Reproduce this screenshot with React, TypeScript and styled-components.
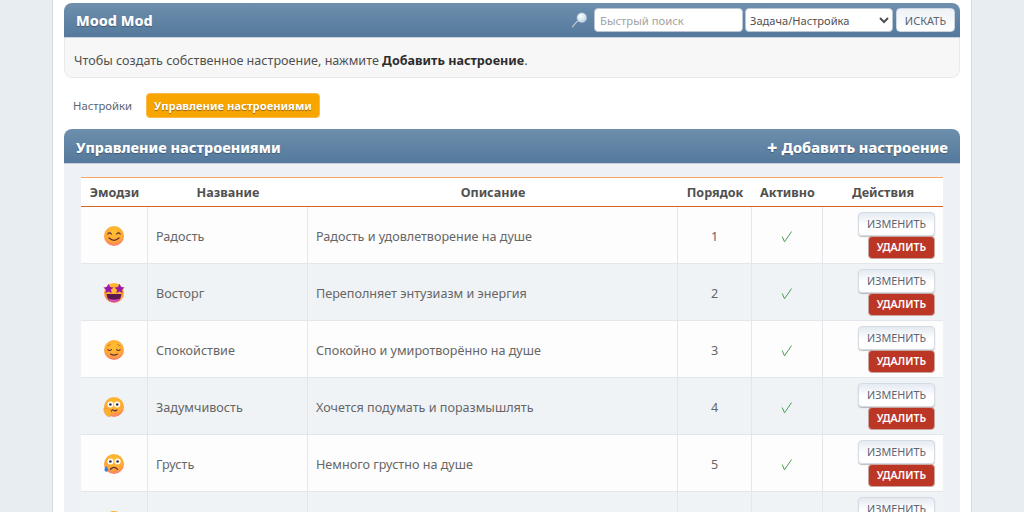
import React from 'react';
import styled, { createGlobalStyle } from 'styled-components';

type Face = 'smile' | 'stars' | 'calm' | 'think' | 'sad' | 'angry';

type Mood = {
    id: number;
    face: Face;
    name: string;
    description: string;
};

const moods: Mood[] = [
    { id: 1, face: 'smile', name: 'Радость', description: 'Радость и удовлетворение на душе' },
    { id: 2, face: 'stars', name: 'Восторг', description: 'Переполняет энтузиазм и энергия' },
    { id: 3, face: 'calm', name: 'Спокойствие', description: 'Спокойно и умиротворённо на душе' },
    { id: 4, face: 'think', name: 'Задумчивость', description: 'Хочется подумать и поразмышлять' },
    { id: 5, face: 'sad', name: 'Грусть', description: 'Немного грустно на душе' },
    { id: 6, face: 'angry', name: 'Злость', description: 'Раздражение и злость' },
];

const GlobalStyle = createGlobalStyle`
  html, body {
    margin: 0;
    height: 100%;
    overflow: hidden;
    background: #e8edf2;
    font-family: "Noto Sans", "Open Sans", sans-serif;
    font-size: 12.6px;
    color: #505050;
  }
`;

const Eye = ({ cx }: { cx: number }) => (
    <>
        <circle cx={cx} cy="8.5" r="3" fill="#fff" />
        <circle cx={cx} cy="8.5" r="1.3" fill="#3a2a3a" />
    </>
);

const EmojiIcon = ({ face }: { face: Face }) => (
    <svg width="22" height="22" viewBox="0 0 22 22">
        <defs>
            <radialGradient id={'g' + face} cx="0.5" cy="0.3" r="0.8">
                <stop offset="0" stopColor="#ffc02e" />
                <stop offset="0.6" stopColor="#ffa733" />
                <stop offset="1" stopColor="#f7688c" />
            </radialGradient>
        </defs>
        <circle cx="11" cy="11" r="10" fill={`url(#g${face})`} />
        {face === 'smile' && (
            <g fill="none" stroke="#5b3140" strokeWidth="1.2" strokeLinecap="round">
                <path d="M4.800 9q1.800-2.400 3.600 0M13.600 9q1.800-2.400 3.600 0" />
                <path d="M6 13q5 4.600 10 0" />
            </g>
        )}
        {face === 'stars' && (
            <>
                <path d="M3.500 12h15q-.6 7.600-7.500 7.800-6.900-.2-7.500-7.800z" fill="#5a1a50" />
                <path d="M5.500 16.600q5.500 2.400 11 0-1.600 3.200-5.500 3.200t-5.500-3.200z" fill="#e04fd0" />
                <path d="M5.500 1.800l1.600 3.200 3.500.4-2.600 2.400.7 3.400-3.200-1.700-3.200 1.700.7-3.400L.4 5.400l3.500-.4zM16.500 1.800l1.600 3.200 3.500.4-2.600 2.400.7 3.400-3.200-1.700-3.200 1.700.7-3.400-2.600-2.400 3.500-.4z" fill="#9a17a8" />
            </>
        )}
        {face === 'calm' && (
            <g fill="none" stroke="#5b3140" strokeWidth="1.100" strokeLinecap="round">
                <path d="M4.800 10.600q1.800 1.800 3.600 0M13.600 10.600q1.800 1.800 3.600 0" />
                <path d="M4.800 6.800l2.600-1.400M17.200 6.800l-2.600-1.400" strokeWidth="0.7" stroke="#b8663a" />
                <path d="M7.500 15q3.500 2.200 7 0" />
            </g>
        )}
        {face === 'think' && (
            <>
                <Eye cx={7.4} />
                <Eye cx={14.2} />
                <path d="M8 15.500q1.200-2.400 2.800-1.200 1.400 1 3-.4" fill="none" stroke="#5b3140" strokeWidth="1.300" strokeLinecap="round" />
                <path d="M.6 12.800q3.800-1.800 7.400 1.800 1 4-1.500 6.400-5-1-5.900-8.200z" fill="#fdb02e" stroke="#ef8f3a" strokeWidth="0.5" />
            </>
        )}
        {face === 'sad' && (
            <>
                <Eye cx={7.4} />
                <Eye cx={14.6} />
                <path d="M7.500 16.200q3.500-3.600 7 0" fill="none" stroke="#5b3140" strokeWidth="1.300" strokeLinecap="round" />
                <path d="M3 13q-2.200 3.200-1.200 5 1.600 1.400 3.200 0 .8-1.800-2-5z" fill="#3a7fd8" />
            </>
        )}
        {face === 'angry' && (
            <g fill="none" stroke="#5b3140" strokeWidth="1.200" strokeLinecap="round">
                <path d="M5 7l3.500 1.600M17 7l-3.500 1.600" />
                <path d="M7.500 15.500q3.500-2.800 7 0" />
            </g>
        )}
    </svg>
);

const SearchIcon = () => (
    <svg width="16" height="16" viewBox="0 0 16 16">
        <defs>
            <radialGradient id="glass" cx="0.4" cy="0.35" r="0.7">
                <stop offset="0" stopColor="#ffffff" />
                <stop offset="1" stopColor="#bcd2e5" />
            </radialGradient>
        </defs>
        <path d="M5.500 9.500L1 14.500" stroke="#c4ced7" strokeWidth="1.800" strokeLinecap="round" />
        <path d="M6 10L1.500 15" stroke="#3d5a73" strokeWidth="0.700" strokeLinecap="round" />
        <circle cx="9.800" cy="5.700" r="5" fill="url(#glass)" stroke="#86a2ba" strokeWidth="0.500" />
    </svg>
);

const CheckIcon = () => (
    <svg width="12" height="13" viewBox="0 0 12 13">
        <path d="M1.200 6.500L3.500 11.800 10.600 1.500" fill="none" stroke="#4a9f52" strokeWidth="1" />
    </svg>
);

const App = () => {
    return (
        <>
            <GlobalStyle />
            <Page>
                <Block>
                    <BlockHeader>
                        <Title>Mood Mod</Title>
                        <SearchForm>
                            <SearchIcon />
                            <SearchInput placeholder="Быстрый поиск" readOnly />
                            <SearchSelect>
                                <option>Задача/Настройка</option>
                            </SearchSelect>
                            <SearchButton>ИСКАТЬ</SearchButton>
                        </SearchForm>
                    </BlockHeader>
                    <Notice>
                        Чтобы создать собственное настроение, нажмите <strong>Добавить настроение</strong>.
                    </Notice>
                </Block>
                <Tabs>
                    <Tab>Настройки</Tab>
                    <Tab active>Управление настроениями</Tab>
                </Tabs>
                <Block>
                    <BlockHeader>
                        <SectionTitle>Управление настроениями</SectionTitle>
                        <AddLink><PlusMark>+</PlusMark> Добавить настроение</AddLink>
                    </BlockHeader>
                    <BlockBody>
                        <Table>
                            <colgroup>
                                <col width="67" />
                                <col width="160" />
                                <col width="370" />
                                <col width="74" />
                                <col width="71" />
                                <col width="120" />
                            </colgroup>
                            <thead>
                                <tr>
                                    <Th>Эмодзи</Th>
                                    <Th>Название</Th>
                                    <Th>Описание</Th>
                                    <Th>Порядок</Th>
                                    <Th>Активно</Th>
                                    <Th>Действия</Th>
                                </tr>
                            </thead>
                            <tbody>
                                {moods.map((mood, index) => (
                                    <Row key={mood.id} even={index % 2 === 1}>
                                        <CenterCell><IconBox><EmojiIcon face={mood.face} /></IconBox></CenterCell>
                                        <Cell>{mood.name}</Cell>
                                        <Cell>{mood.description}</Cell>
                                        <CenterCell>{mood.id}</CenterCell>
                                        <CenterCell><IconBox><CheckIcon /></IconBox></CenterCell>
                                        <ActionsCell>
                                            <Actions>
                                                <EditButton>ИЗМЕНИТЬ</EditButton>
                                                <DeleteButton>УДАЛИТЬ</DeleteButton>
                                            </Actions>
                                        </ActionsCell>
                                    </Row>
                                ))}
                            </tbody>
                        </Table>
                    </BlockBody>
                </Block>
            </Page>
        </>
    );
};

const Page = styled.div`
  box-sizing: border-box;
  width: 920px;
  margin-left: 52px;
  padding: 3px 11px 20px;
  background: #fff;
  border-left: 1px solid #d3d8dd;
  border-right: 1px solid #d3d8dd;
  min-height: 100vh;
  display: flex;
  flex-direction: column;
`;

const Block = styled.div`
  border-radius: 8px;
  overflow: hidden;
`;

const BlockHeader = styled.div`
  height: 35px;
  box-sizing: border-box;
  display: flex;
  align-items: center;
  justify-content: space-between;
  padding: 0 5px 0 12px;
  background: linear-gradient(to bottom, #6e8fad, #54799c);
  border-bottom: 1px solid #c9d2da;
`;

const Title = styled.div`
  padding-top: 1px;
  font-size: 14.4px;
  font-weight: 800;
  color: #fff;
  text-shadow: 0 1px 1px rgba(0, 0, 0, 0.3);
`;

const SectionTitle = styled(Title)`
  padding-top: 2px;
`;

const AddLink = styled.a`
  display: flex;
  align-items: center;
  gap: 4px;
  padding-top: 1px;
  margin-right: 7px;
  font-size: 14.6px;
  font-weight: 800;
  color: #fff;
  text-shadow: 0 1px 1px rgba(0, 0, 0, 0.3);
`;

const PlusMark = styled.span`
  font-size: 18px;
  line-height: 1;
`;

const SearchForm = styled.div`
  display: flex;
  align-items: center;
  gap: 2px;

  svg {
    margin-right: 4px;
  }
`;

const SearchInput = styled.input`
  box-sizing: border-box;
  width: 149px;
  height: 24px;
  padding: 0 5px;
  border: 1px solid #b9c6d2;
  border-radius: 4px;
  background: #fff;
  font-family: inherit;
  font-size: 11.3px;
  outline: none;

  &::placeholder {
    color: #a3a3a3;
  }
`;

const SearchSelect = styled.select`
  box-sizing: border-box;
  width: 148px;
  height: 24px;
  padding: 0;
  border: 1px solid #b9c6d2;
  border-radius: 4px;
  background: #fff;
  color: #505050;
  font-family: inherit;
  font-size: 11.1px;
`;

const SearchButton = styled.button`
  box-sizing: border-box;
  width: 59px;
  height: 24px;
  margin-left: 1px;
  padding: 0;
  border: 1px solid #cbd5df;
  border-radius: 4px;
  background: linear-gradient(to bottom, #eef2f6, #fff);
  color: #5c6474;
  font-family: inherit;
  font-size: 11px;
`;

const Notice = styled.div`
  box-sizing: border-box;
  height: 40px;
  padding: 6px 9px 0;
  display: flex;
  align-items: center;
  white-space: pre;
  background: #f7f7f7;
  border: 1px solid #e7e9ec;
  border-top: none;
  border-radius: 0 0 8px 8px;

  strong {
    color: #2d2d2d;
  }
`;

const Tabs = styled.div`
  display: flex;
  align-items: center;
  gap: 5px;
  margin: 15px 0 11px;
`;

const Tab = styled.a<{ active?: boolean }>`
  height: 25px;
  box-sizing: border-box;
  padding: 0 ${({ active }) => (active ? 7 : 8)}px;
  display: flex;
  align-items: center;
  border-radius: 4px;
  font-size: ${({ active }) => (active ? 11.22 : 11.3)}px;
  font-weight: ${({ active }) => (active ? 700 : 400)};
  color: ${({ active }) => (active ? '#fff' : '#5c6474')};
  background: ${({ active }) => (active ? '#f9a500' : 'transparent')};
  border: 1px solid ${({ active }) => (active ? '#fbb84d' : 'transparent')};
  text-shadow: ${({ active }) => (active ? '0 1px 1px rgba(0, 0, 0, 0.4)' : 'none')};
`;

const BlockBody = styled.div`
  padding: 13px 17px 0;
  background: #eef2f6;
`;

const Table = styled.table`
  width: 862px;
  table-layout: fixed;
  border-collapse: separate;
  border-spacing: 0;
  background: #fff;
`;

const Th = styled.th`
  box-sizing: border-box;
  height: 30px;
  padding: 1px 0 0;
  font-size: 12.6px;
  font-weight: 700;
  text-align: center;
  color: #505050;
  border-top: 1px solid #f5a662;
  border-bottom: 1px solid #d2691e;
`;

const Row = styled.tr<{ even?: boolean }>`
  height: 57px;
  background: ${({ even }) => (even ? '#f0f3f6' : '#fdfdfd')};
`;

const Cell = styled.td`
  box-sizing: border-box;
  padding: 2px 8px 0;
  border-right: 1px solid #e3e6ea;
  border-bottom: 1px solid #e3e6ea;
  color: #666;

  &:last-child {
    border-right: none;
  }
`;

const CenterCell = styled(Cell)`
  text-align: center;
`;

const ActionsCell = styled(Cell)`
  padding: 0 8px 0 0;
`;

const IconBox = styled.div`
  display: flex;
  justify-content: center;
`;

const Actions = styled.div`
  display: flex;
  flex-direction: column;
  align-items: flex-end;
`;

const EditButton = styled.button`
  box-sizing: border-box;
  width: 77px;
  height: 24px;
  padding: 0;
  border: 1px solid #d5dbe2;
  border-radius: 4px;
  background: linear-gradient(to bottom, #e4eaf2, #fff 55%);
  box-shadow: 0 1px 1px rgba(0, 0, 0, 0.25);
  color: #5c6474;
  font-family: inherit;
  font-size: 10.8px;
`;

const DeleteButton = styled.button`
  box-sizing: border-box;
  width: 67px;
  height: 23px;
  padding: 0;
  border: 1px solid #c9a7a0;
  border-radius: 4px;
  background: #bc3626;
  color: #fff;
  font-family: inherit;
  font-size: 10.6px;
  font-weight: 600;
`;

export default App;
